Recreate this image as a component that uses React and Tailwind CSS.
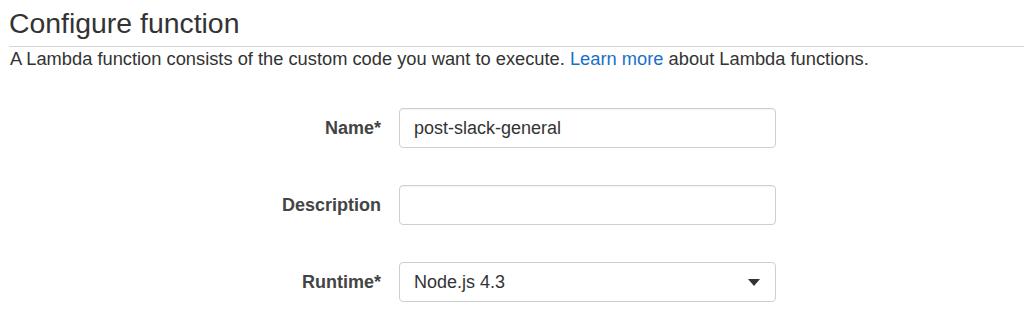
import React from "react";

const fields = [
  { label: "Name*", value: "post-slack-general" },
  { label: "Description", value: "" },
];

function Label({ children }) {
  return (
    <div className="w-[381px] shrink-0 text-right text-[18px] font-bold text-[#444]">
      {children}
    </div>
  );
}

export default function App() {
  return (
    <div className="bg-white h-[323px] pl-[10px] pt-[6px] text-[#333] font-['Liberation_Sans',Arial,sans-serif]">
      <h1 className="text-[28.4px] leading-[34px] font-normal text-[#333] -ml-[1px] pb-[6px] border-b border-[#d4d4d4]">
        Configure function
      </h1>
      <p className="text-[18.3px] leading-6">
        A Lambda function consists of the custom code you want to execute.{" "}
        <a href="#" className="text-[#1a6fc9]">
          Learn more
        </a>{" "}
        about Lambda functions.
      </p>

      <div className="mt-[37px] flex flex-col gap-[37px] -ml-[10px]">
        {fields.map((f) => (
          <div key={f.label} className="flex items-center">
            <Label>{f.label}</Label>
            <input
              readOnly
              value={f.value}
              className="ml-[18px] w-[377px] h-[40px] rounded-[4px] border border-[#cfcfcf] px-[14px] text-[18px] text-[#333] outline-none shadow-[inset_0_1px_1px_rgba(0,0,0,0.05)]"
            />
          </div>
        ))}
        <div className="flex items-center">
          <Label>Runtime*</Label>
          <div className="ml-[18px] w-[377px] h-[40px] rounded-[4px] border border-[#cfcfcf] px-[14px] flex items-center justify-between text-[18px]">
            <span>Node.js 4.3</span>
            <svg width="12" height="7" viewBox="0 0 12 7" className="mr-[1px]">
              <path d="M0 0h12L6 7z" fill="#333" />
            </svg>
          </div>
        </div>
      </div>
    </div>
  );
}
